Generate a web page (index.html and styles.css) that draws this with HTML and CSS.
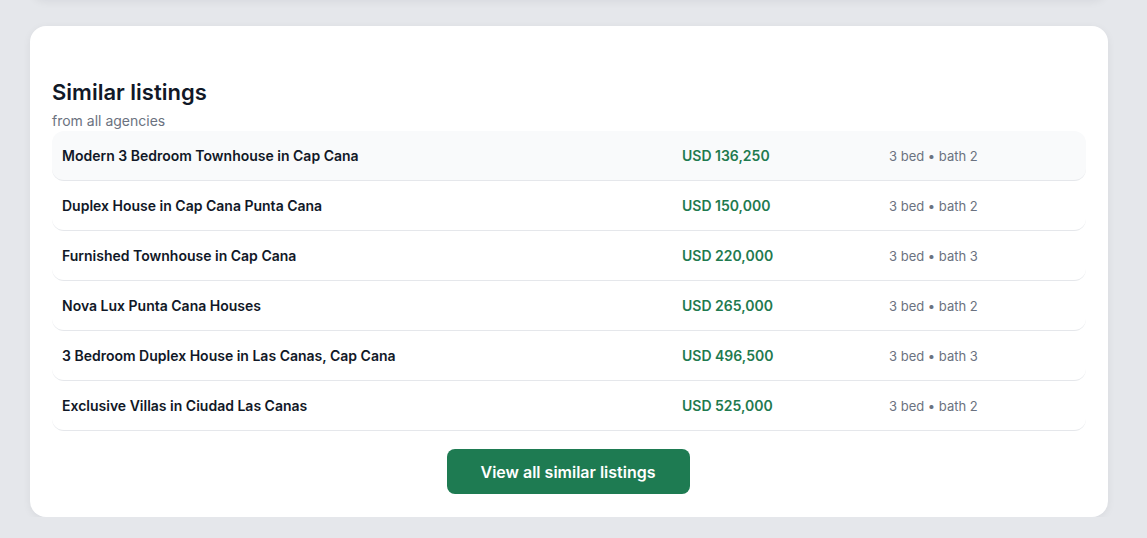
FILE: index.html
```html
<!DOCTYPE html>
<html lang="en">
<head>
  <meta charset="UTF-8">
  <meta name="viewport" content="width=device-width, initial-scale=1.0">
  <title>Similar listings</title>
  <link rel="stylesheet" href="styles.css">
</head>
<body>
  <div class="page">
    <!-- Bottom edge of the section above -->
    <div class="card card-prev"></div>

    <!-- Similar listings -->
    <section class="card similar">
      <h2>Similar listings</h2>
      <p class="subtitle">from all agencies</p>

      <div class="listing-list">
        <a href="#" class="listing active">
          <span class="listing-name">Modern 3 Bedroom Townhouse in Cap Cana</span>
          <span class="listing-price">USD 136,250</span>
          <span class="listing-specs">3 bed • bath 2</span>
        </a>
        <a href="#" class="listing">
          <span class="listing-name">Duplex House in Cap Cana Punta Cana</span>
          <span class="listing-price">USD 150,000</span>
          <span class="listing-specs">3 bed • bath 2</span>
        </a>
        <a href="#" class="listing">
          <span class="listing-name">Furnished Townhouse in Cap Cana</span>
          <span class="listing-price">USD 220,000</span>
          <span class="listing-specs">3 bed • bath 3</span>
        </a>
        <a href="#" class="listing">
          <span class="listing-name">Nova Lux Punta Cana Houses</span>
          <span class="listing-price">USD 265,000</span>
          <span class="listing-specs">3 bed • bath 2</span>
        </a>
        <a href="#" class="listing">
          <span class="listing-name">3 Bedroom Duplex House in Las Canas, Cap Cana</span>
          <span class="listing-price">USD 496,500</span>
          <span class="listing-specs">3 bed • bath 3</span>
        </a>
        <a href="#" class="listing">
          <span class="listing-name">Exclusive Villas in Ciudad Las Canas</span>
          <span class="listing-price">USD 525,000</span>
          <span class="listing-specs">3 bed • bath 2</span>
        </a>
      </div>

      <div class="actions">
        <button type="button" class="btn-primary">View all similar listings</button>
      </div>
    </section>
  </div>
</body>
</html>
```

FILE: styles.css
```css
body {
  margin: 0;
  font-family: Inter, "Noto Sans", Arial, sans-serif;
  background-color: #E5E7EB; /* Page gray */
  color: #111827;
}

.page {
  padding: 0 39px 0 30px;
  display: flex;
  flex-direction: column;
  gap: 26px;
}

/* Cards */
.card {
  background: #FFFFFF;
  border-radius: 16px;
  box-shadow: 0 2px 8px rgba(17, 24, 39, 0.06);
}

.card-prev {
  height: 100px;
  margin-top: -100px;
}

.similar {
  padding: 51px 22px 23px;
}

.similar h2 {
  margin: 0;
  font-size: 22px;
  line-height: 30px;
  font-weight: 600;
  color: #111827;
}

.subtitle {
  margin: 3px 0 0;
  font-size: 14px;
  line-height: 21px;
  color: #6B7280;
}

/* Listing rows */
.listing-list {
  display: flex;
  flex-direction: column;
}

.listing {
  display: grid;
  grid-template-columns: 1fr 207px 187px;
  align-items: center;
  height: 49px;
  padding: 0 10px;
  border-bottom: 1px solid #E5E7EB;
  border-radius: 12px;
  text-decoration: none;
  color: inherit;
}

.listing.active {
  background-color: #F9FAFB;
}

.listing-name {
  font-size: 14px;
  font-weight: 600;
  color: #111827;
}

.listing-price {
  font-size: 14px;
  font-weight: 600;
  color: #1F7A4F; /* Green */
}

.listing-specs {
  font-size: 13px;
  color: #6B7280;
}

/* Footer button */
.actions {
  display: flex;
  justify-content: center;
  margin-top: 18px;
}

.btn-primary {
  width: 243px;
  height: 45px;
  margin-left: -2px;
  background-color: #1E7B52;
  color: #FFFFFF;
  border: none;
  border-radius: 8px;
  font-family: inherit;
  font-size: 16px;
  font-weight: 600;
  cursor: pointer;
}

.btn-primary:hover {
  background-color: #17643F;
}
```
